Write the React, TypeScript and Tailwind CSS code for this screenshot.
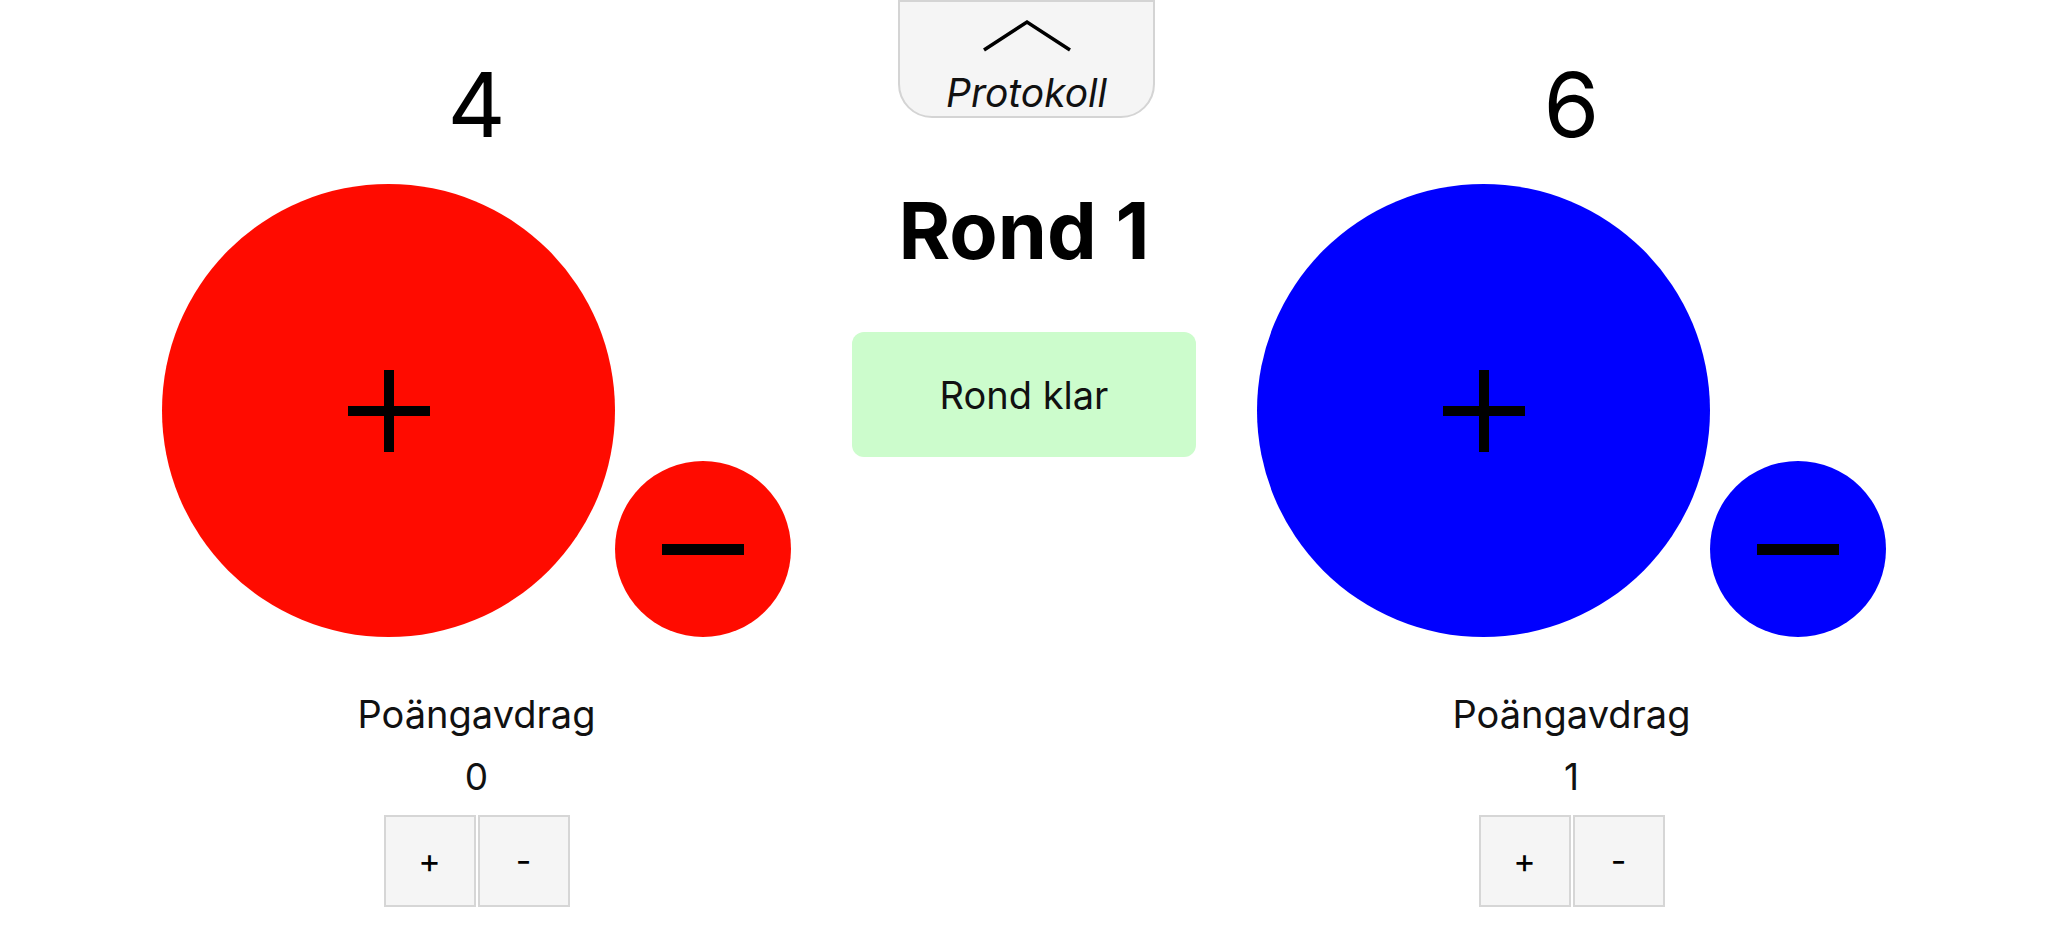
import React from "react";

const font = { fontFamily: "Inter, 'Noto Sans', sans-serif" };

function PlusIcon() {
  return (
    <svg width="82" height="82" viewBox="0 0 82 82">
      <rect x="36" y="0" width="10" height="82" fill="#000" />
      <rect x="0" y="36" width="82" height="10" fill="#000" />
    </svg>
  );
}

function MinusIcon() {
  return (
    <svg width="82" height="11" viewBox="0 0 82 11">
      <rect x="0" y="0" width="82" height="11" fill="#000" />
    </svg>
  );
}

type SideProps = {
  score: number;
  deduction: number;
  color: string;
};

function FighterSide({ score, deduction, color }: SideProps) {
  return (
    <div className="w-[629px] flex flex-col items-center text-black">
      <div className="mt-[60px] h-[90px] text-[90px] leading-none">{score}</div>

      <div className="mt-[34px] flex items-end">
        <button
          className={`w-[453px] h-[453px] rounded-full flex items-center justify-center ${color}`}
        >
          <PlusIcon />
        </button>
        <button
          className={`w-[176px] h-[176px] rounded-full flex items-center justify-center ${color}`}
        >
          <MinusIcon />
        </button>
      </div>

      <div className="mt-[58px] text-[38px] leading-none text-[#111]">Poängavdrag</div>
      <div className="mt-[25px] text-[37px] leading-none text-[#111]">{deduction}</div>

      <div className="mt-[20px] flex gap-[2px]">
        <button className="w-[92px] h-[92px] border-2 border-[#d6d6d6] bg-[#f5f5f5] text-[34px] leading-none text-black">
          +
        </button>
        <button className="w-[92px] h-[92px] border-2 border-[#d6d6d6] bg-[#f5f5f5] text-[34px] leading-none text-black">
          -
        </button>
      </div>
    </div>
  );
}

export default function App() {
  return (
    <div className="w-full h-[946px] bg-white flex justify-center gap-[61px] overflow-hidden" style={font}>
      <FighterSide score={4} deduction={0} color="bg-[#ff0b00]" />

      <div className="w-[344px] flex flex-col items-center">
        <div className="ml-[5px] w-[257px] h-[118px] border-2 border-[#d4d4d4] bg-[#f5f5f5] rounded-b-[34px] flex flex-col items-center">
          <svg className="mt-[17px]" width="92" height="34" viewBox="0 0 92 34">
            <polyline points="3,31 46,3 89,31" fill="none" stroke="#000" strokeWidth="3.5" />
          </svg>
          <div className="mt-[20px] text-[39px] leading-none italic text-[#111]">Protokoll</div>
        </div>

        <div className="mt-[73px] text-[79px] font-bold leading-none text-black">Rond 1</div>

        <button className="mt-[62px] w-[344px] h-[125px] rounded-[12px] bg-[#ccfccc] text-[38px] leading-none text-[#111]">
          Rond klar
        </button>
      </div>

      <FighterSide score={6} deduction={1} color="bg-[#0000ff]" />
    </div>
  );
}
